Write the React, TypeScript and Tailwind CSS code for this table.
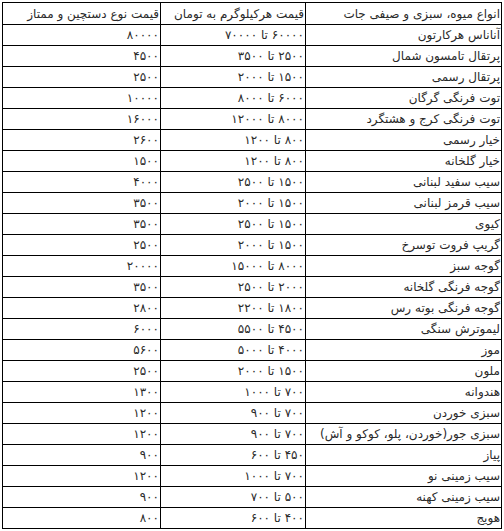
import React from "react";

const rows: [string, string, string][] = [
  ["آناناس هرکارتون", "۶۰۰۰۰ تا ۷۰۰۰۰", "۸۰۰۰۰"],
  ["پرتقال تامسون شمال", "۲۵۰۰ تا ۳۵۰۰", "۴۵۰۰"],
  ["پرتقال رسمی", "۱۵۰۰ تا ۲۰۰۰", "۲۵۰۰"],
  ["توت فرنگی گرگان", "۶۰۰۰ تا ۸۰۰۰", "۱۰۰۰۰"],
  ["توت فرنگی کرج و هشتگرد", "۸۰۰۰ تا ۱۲۰۰۰", "۱۶۰۰۰"],
  ["خیار رسمی", "۸۰۰ تا ۱۲۰۰", "۲۶۰۰"],
  ["خیار گلخانه", "۸۰۰ تا ۱۲۰۰", "۱۵۰۰"],
  ["سیب سفید لبنانی", "۱۵۰۰ تا ۲۵۰۰", "۴۰۰۰"],
  ["سیب قرمز لبنانی", "۱۵۰۰ تا ۲۰۰۰", "۳۵۰۰"],
  ["کیوی", "۱۵۰۰ تا ۲۵۰۰", "۳۵۰۰"],
  ["گریپ فروت توسرخ", "۱۵۰۰ تا ۲۰۰۰", "۲۵۰۰"],
  ["گوجه سبز", "۸۰۰۰ تا ۱۵۰۰۰", "۲۰۰۰۰"],
  ["گوجه فرنگی گلخانه", "۲۰۰۰ تا ۲۵۰۰", "۳۵۰۰"],
  ["گوجه فرنگی بوته رس", "۱۸۰۰ تا ۲۲۰۰", "۲۸۰۰"],
  ["لیموترش سنگی", "۴۵۰۰ تا ۵۵۰۰", "۶۰۰۰"],
  ["موز", "۴۰۰۰ تا ۵۰۰۰", "۵۶۰۰"],
  ["ملون", "۱۵۰۰ تا ۲۰۰۰", "۲۵۰۰"],
  ["هندوانه", "۷۰۰ تا ۱۰۰۰", "۱۳۰۰"],
  ["سبزی خوردن", "۷۰۰ تا ۹۰۰", "۱۲۰۰"],
  ["سبزی جور(خوردن، پلو، کوکو و آش)", "۷۰۰ تا ۹۰۰", "۱۲۰۰"],
  ["پیاز", "۴۵۰ تا ۶۰۰", "۹۰۰"],
  ["سیب زمینی نو", "۷۰۰ تا ۱۰۰۰", "۱۲۰۰"],
  ["سیب زمینی کهنه", "۵۰۰ تا ۷۰۰", "۹۰۰"],
  ["هویج", "۴۰۰ تا ۶۰۰", "۸۰۰"],
];

export default function App() {
  return (
    <div className="w-[504px] h-[531px] bg-white pt-[2px] pl-[2px]">
      <table
        dir="rtl"
        className="border-collapse table-fixed w-[499px] text-[12px] leading-none text-[#2a2a2a]"
        style={{ fontFamily: '"DejaVu Sans", Tahoma, sans-serif' }}
      >
        <colgroup>
          <col className="w-[196px]" />
          <col className="w-[145px]" />
          <col className="w-[158px]" />
        </colgroup>
        <tbody>
          <tr className="h-[22px]">
            <td className="border border-black pr-[1px] text-right whitespace-nowrap overflow-hidden">انواع میوه، سبزی و صیفی جات</td>
            <td className="border border-black pr-[1px] text-right whitespace-nowrap overflow-hidden">قیمت هرکیلوگرم به تومان</td>
            <td className="border border-black pr-[1px] text-right whitespace-nowrap overflow-hidden">قیمت نوع دستچین و ممتاز</td>
          </tr>
          {rows.map((r, i) => (
            <tr key={i} className="h-[21px]">
              <td className="border border-black pr-[1px] text-right whitespace-nowrap overflow-hidden">{r[0]}</td>
              <td className="border border-black pr-[1px] text-right whitespace-nowrap overflow-hidden">{r[1]}</td>
              <td className="border border-black pr-[1px] text-right whitespace-nowrap overflow-hidden">{r[2]}</td>
            </tr>
          ))}
        </tbody>
      </table>
    </div>
  );
}
